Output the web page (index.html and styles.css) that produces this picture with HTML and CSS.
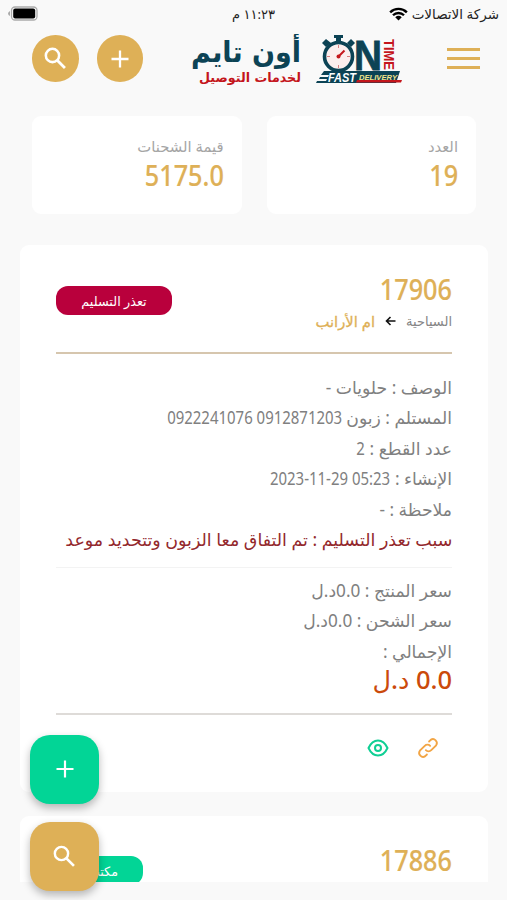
FILE: index.html
```html
<!DOCTYPE html>
<html lang="ar" dir="rtl">
  <head>
    <meta charset="UTF-8" />
    <meta name="viewport" content="width=device-width, initial-scale=1.0" />
    <title>أون تايم</title>
    <link rel="stylesheet" href="styles.css">
  </head>
  <body>
    <div class="statusbar">
      <div class="carrier">
        <span>شركة الاتصالات</span>
        <svg width="19" height="14" viewBox="0 0 20 14">
          <path d="M1.2 5.2a12.6 12.6 0 0 1 17.6 0M4.2 8.3a8.3 8.3 0 0 1 11.6 0" fill="none" stroke="#000" stroke-width="2.5" />
          <path d="M6.6 10.4a5 5 0 0 1 6.8 0L10 13.8z" />
        </svg>
      </div>
      <div class="clock">١١:٢٣ م</div>
      <svg class="battery" width="30" height="15" viewBox="0 0 30 15">
        <rect x="3.5" y="1" width="25.5" height="13" rx="3.5" fill="none" stroke="#aaa" stroke-width="1.3" />
        <rect x="5.2" y="2.6" width="22" height="9.8" rx="2" />
        <path d="M2 5v5Q0 9 0 7.5T2 5z" fill="#aaa" />
      </svg>
    </div>

    <header>
      <button class="menu"><span></span><span></span><span></span></button>
      <svg class="logo" width="212" height="54" viewBox="0 0 212 54" direction="ltr">
        <g class="logo-ar">
          <text x="55" y="28" font-size="29" text-anchor="middle" textLength="110" lengthAdjust="spacingAndGlyphs" fill="#0c4355">أون تايم</text>
          <text x="59" y="48" font-size="13" text-anchor="middle" textLength="102" lengthAdjust="spacingAndGlyphs" fill="#c4161c">لخدمات التوصيل</text>
        </g>
        <!-- stopwatch -->
        <path d="M143 1h9v3h-2v5h-5V4h-2zM131 9l4-4 5 4-5 4zM156 9l4-4 4 4-4 4z" fill="#0c4355" />
        <circle cx="147.5" cy="22.5" r="14" fill="#fbeeee" stroke="#0c4355" stroke-width="3.6" />
        <path d="M147.5 11v3M147.5 31v3M136 22.5h3M156 22.5h3" stroke="#d98080" />
        <path d="M147.5 22.5l6-6" stroke="#c4161c" stroke-width="2" />
        <circle cx="147.5" cy="22.5" r="2" fill="#c4161c" />
        <text class="logo-en" x="163" y="35.5" font-size="42" textLength="28" lengthAdjust="spacingAndGlyphs" fill="#0c4355" stroke="#0c4355" stroke-width="0.8">N</text>
        <text class="logo-en" transform="translate(193 5) rotate(90)" font-size="14" textLength="31" lengthAdjust="spacingAndGlyphs" fill="#c4161c">TIME</text>
        <path d="M133 37h76l-4 12h-80l1-2h9l1-2h-8l1-2h8l1-2h-8z" fill="#0c4355" />
        <path d="M166 46h45l-1 2.5h-45z" fill="#c4161c" />
        <text class="logo-en logo-it" x="137" y="48" font-size="12" textLength="28" lengthAdjust="spacingAndGlyphs" fill="#fff">FAST</text>
        <text class="logo-en logo-it" x="168" y="45.5" font-size="8" textLength="38" lengthAdjust="spacingAndGlyphs" fill="#f3e58c">DELIVERY</text>
      </svg>
      <div class="header-buttons">
        <button class="round">
          <svg width="24" height="24" viewBox="0 0 24 24"><path d="M12 3.5v17M3.5 12h17" fill="none" stroke="#fff" stroke-width="2.3" /></svg>
        </button>
        <button class="round">
          <svg width="29" height="29" viewBox="0 0 24 24"><path d="M13.6 13.6l6.2 6.2" fill="none" stroke="#fff" stroke-width="2.3" /><circle cx="9.5" cy="9.5" r="5.5" fill="none" stroke="#fff" stroke-width="2.1" /></svg>
        </button>
      </div>
    </header>

    <div class="stats">
      <div class="stat">
        <p class="stat-label">العدد</p>
        <p class="number"><span class="n">19</span></p>
      </div>
      <div class="stat">
        <p class="stat-label">قيمة الشحنات</p>
        <p class="number"><span class="n">5175.0</span></p>
      </div>
    </div>

    <div class="card">
      <div class="card-head">
        <div>
          <p class="number"><span class="n">17906</span></p>
          <p class="route">
            <span class="from">السياحية</span>
            <svg width="11" height="10" viewBox="0 0 11 10"><path d="M10.5 5H1.5M5.5 1l-4 4 4 4" fill="none" stroke="#111" stroke-width="1.6" /></svg>
            <span class="to">ام الأرانب</span>
          </p>
        </div>
        <div class="badge failed">تعذر التسليم</div>
      </div>
      <hr class="gold-line" />
      <div class="details">
        <p>الوصف : حلويات -</p>
        <p>المستلم : زبون <span class="n">0912871203 0922241076</span></p>
        <p>عدد القطع : <span class="n">2</span></p>
        <p>الإنشاء : <bdi class="n">2023-11-29 05:23</bdi></p>
        <p>ملاحظة : -</p>
        <p class="reason"><span>سبب تعذر التسليم : تم التفاق معا الزبون وتتحديد موعد</span></p>
      </div>
      <hr class="thin-line" />
      <div class="prices">
        <p>سعر المنتج : 0.0د.ل</p>
        <p>سعر الشحن : 0.0د.ل</p>
        <p>الإجمالي :</p>
        <p class="total">0.0 د.ل</p>
      </div>
      <hr class="gray-line" />
      <div class="actions">
        <svg width="26" height="26" viewBox="0 0 24 24"><path d="M10 14a3.5 3.5 0 0 0 5 0l4.5-4.5a3.6 3.6 0 0 0-5-5L13 6M14 10a3.5 3.5 0 0 0-5 0l-4.5 4.5a3.6 3.6 0 0 0 5 5L11 18" fill="none" stroke="#f2a545" stroke-width="1.7" stroke-linecap="round" /></svg>
        <svg width="22" height="20" viewBox="0 0 22 20"><path d="M1.5 10Q5 2.5 11 2.5T20.5 10Q17 17.5 11 17.5T1.5 10z" fill="none" stroke="#10cf94" stroke-width="2" stroke-linejoin="round" /><circle cx="11" cy="10" r="3" fill="none" stroke="#10cf94" stroke-width="2" /></svg>
      </div>
    </div>

    <div class="card card-next">
      <div class="card-head">
        <p class="number"><span class="n">17886</span></p>
        <div class="badge office">مكتب</div>
      </div>
    </div>

    <div class="floating">
      <button class="fab green">
        <svg width="24" height="24" viewBox="0 0 24 24"><path d="M12 3.5v17M3.5 12h17" fill="none" stroke="#fff" stroke-width="2.2" /></svg>
      </button>
      <button class="fab">
        <svg width="29" height="29" viewBox="0 0 24 24"><path d="M13.6 13.6l6.2 6.2" fill="none" stroke="#fff" stroke-width="2.2" /><circle cx="9.5" cy="9.5" r="5.5" fill="none" stroke="#fff" stroke-width="2" /></svg>
      </button>
    </div>
  </body>
</html>
```
FILE: styles.css
```css
* {
  margin: 0;
  padding: 0;
  box-sizing: border-box;
}

body {
  height: 900px;
  overflow: hidden;
  background-color: #f9f9f9;
  color: #808080;
  font-family: "Noto Sans", "DejaVu Sans", sans-serif;
}

button {
  border: none;
}

svg {
  display: block;
}

/* narrow digits */
.n {
  display: inline-block;
  white-space: nowrap;
  transform: scaleX(0.87);
  transform-origin: right center;
}

/* Status bar */
.statusbar {
  height: 27px;
  padding: 0 8px;
  display: grid;
  grid-template-columns: 1fr auto 1fr;
  align-items: center;
  color: #222;
  font-size: 13px;
}

.carrier {
  display: flex;
  align-items: center;
  gap: 4px;
  font-size: 13.5px;
}

.battery {
  justify-self: end;
}

/* Header */
header {
  height: 64px;
  padding: 0 27px 1px 32px;
  display: flex;
  align-items: center;
  justify-content: space-between;
}

.menu {
  width: 33px;
  background: none;
  display: flex;
  flex-direction: column;
  gap: 5.5px;
}

.menu span {
  height: 3.5px;
  background-color: #deb057;
}

.logo {
  margin-top: 4px;
  margin-left: 3px;
}

.logo-ar {
  font-family: "DejaVu Sans", sans-serif;
  font-weight: bold;
}

.logo-en {
  font-family: "Liberation Sans", sans-serif;
  font-weight: bold;
}

.logo-it {
  font-style: italic;
}

.header-buttons {
  display: flex;
  gap: 18px;
}

.round {
  width: 46.5px;
  height: 46.5px;
  border-radius: 50%;
  background-color: #deb057;
  display: flex;
  align-items: center;
  justify-content: center;
}

/* Stats */
.stats {
  display: grid;
  grid-template-columns: 1fr 1fr;
  gap: 25px;
  padding: 25px 31px 0 32px;
}

.stat {
  height: 98px;
  padding: 18px 18px;
  background-color: #fff;
  border-radius: 9px;
}

.stat-label {
  height: 23px;
  line-height: 24px;
  font-size: 14.8px;
  color: #a5a5a5;
}

.number {
  height: 36px;
  line-height: 36px;
  font-size: 29px;
  font-weight: 500;
  color: #deb057;
  -webkit-text-stroke: 0.2px #deb057;
}

/* Cards */
.card {
  height: 547px;
  margin: 31px 19px 0 20px;
  padding: 26px 36px 0;
  background-color: #fff;
  border-radius: 9px;
}

.card-head {
  display: flex;
  justify-content: space-between;
  align-items: flex-start;
}

.card-head .number {
  line-height: 35px;
}

.route {
  height: 28px;
  display: flex;
  align-items: center;
  gap: 10px;
}

.from {
  font-size: 13px;
  color: #858585;
}

.to {
  font-size: 14.8px;
  color: #deb057;
  -webkit-text-stroke: 0.3px #deb057;
}

.badge {
  width: 116px;
  height: 29px;
  margin-top: 15px;
  border-radius: 12px;
  color: #fff;
  font-size: 12.8px;
  line-height: 30px;
  text-align: center;
}

.failed {
  background-color: #b9003c;
}

.office {
  background-color: #02d596;
}

hr {
  border: none;
}

.gold-line {
  height: 2px;
  margin-top: 17px;
  background-color: #d6c6ae;
}

.details {
  padding-top: 18.5px;
}

.details p,
.prices p {
  height: 30.5px;
  line-height: 30.5px;
  font-size: 17.2px;
}

.details .reason {
  color: #93282c;
}

.reason span {
  display: inline-block;
  white-space: nowrap;
  transform: scaleX(1.015);
  transform-origin: right center;
}

.thin-line {
  height: 1px;
  margin-top: 11.5px;
  background-color: #f3f3f3;
}

.prices {
  padding-top: 7.5px;
}

.prices .total {
  height: 28px;
  line-height: 25px;
  font-size: 25.5px;
  font-weight: 500;
  color: #cb4a0b;
}

.gray-line {
  height: 2px;
  margin-top: 18px;
  background-color: #dedbd8;
}

.actions {
  display: flex;
  align-items: center;
  gap: 26px;
  padding: 20px 11px 0;
}

.card-next {
  height: 66px;
  margin-top: 24px;
  overflow: hidden;
  border-radius: 9px 9px 0 0;
}

.card-next .badge {
  width: 87px;
  margin-top: 14px;
  padding-right: 25px;
  text-align: right;
}

/* Floating buttons over the list */
.floating {
  position: fixed;
  left: 30px;
  bottom: 9.5px;
  display: flex;
  flex-direction: column;
  gap: 18px;
}

.fab {
  width: 69px;
  height: 69px;
  border-radius: 20px;
  background-color: #deb057;
  box-shadow: 0 4px 8px rgba(0, 0, 0, 0.28);
  display: flex;
  align-items: center;
  justify-content: center;
}

.green {
  background-color: #02d596;
}
```
